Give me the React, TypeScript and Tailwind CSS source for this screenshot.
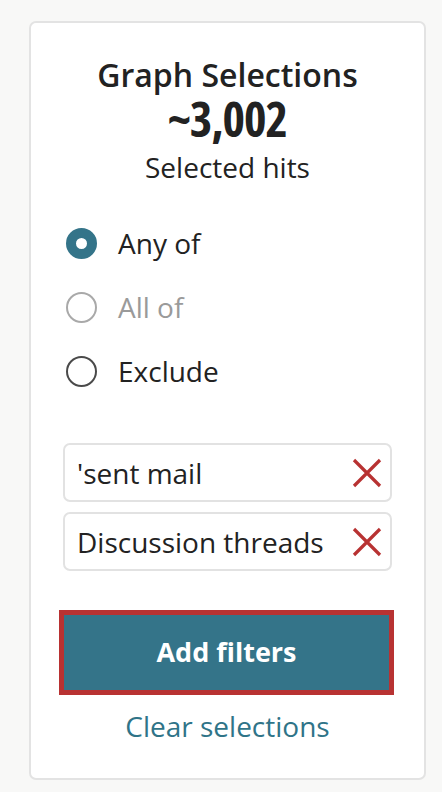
import { ReactNode } from 'react';

const tags = ["'sent mail", 'Discussion threads'];

function Radio({ label, state }: { label: string; state: 'on' | 'off' | 'disabled' }) {
  return (
    <div className="flex items-center gap-[21px] h-[64px]">
      {state === 'on' ? (
        <span className="w-[31px] h-[31px] rounded-full border-[10px] border-[#347489] bg-white box-border" />
      ) : (
        <span
          className={`w-[31px] h-[31px] rounded-full border-2 bg-white box-border ${
            state === 'disabled' ? 'border-[#a9a9a9]' : 'border-[#4a4a4a]'
          }`}
        />
      )}
      <span className={`text-[28px] ${state === 'disabled' ? 'text-[#9a9a9a]' : 'text-[#222]'}`}>{label}</span>
    </div>
  );
}

function Tag({ children }: { children: ReactNode }) {
  return (
    <div className="flex items-center justify-between h-[59px] border-2 border-[#e2e2e2] rounded-[7px] pl-[12px] pr-[7px]">
      <span className="text-[28px] text-[#222]">{children}</span>
      <svg width="32" height="32" viewBox="0 0 32 32" className="shrink-0">
        <path d="M3 3 L29 29 M29 3 L3 29" stroke="#b83232" strokeWidth="3.2" strokeLinecap="butt" />
      </svg>
    </div>
  );
}

export default function App() {
  return (
    <div className="min-h-screen bg-[#f8f8f7] pl-[29px] pr-[16px] pt-[21px] font-['Open_Sans',sans-serif]">
      <div className="h-[759px] bg-white border-2 border-[#e3e3e3] rounded-[7px] px-[32px] pt-[34px]">
        <div className="text-center text-[#222]">
          <h1 className="text-[32px] font-semibold leading-[36px]">Graph Selections</h1>
          <div className="text-[48px] font-bold leading-[48px] tracking-[-1px] mt-[2px] [font-stretch:75%]">~3,002</div>
          <div className="text-[28px] leading-[40px] mt-[4px]">Selected hits</div>
        </div>

        <div className="mt-[24px] pl-[3px]">
          <Radio label="Any of" state="on" />
          <Radio label="All of" state="disabled" />
          <Radio label="Exclude" state="off" />
        </div>

        <div className="mt-[40px] flex flex-col gap-[10px]">
          {tags.map((t) => (
            <Tag key={t}>{t}</Tag>
          ))}
        </div>

        <button className="block mt-[39px] w-[335px] h-[85px] bg-[#347489] border-[5px] border-[#b83232] text-white text-[27px] font-bold -ml-[4px]">
          Add filters
        </button>

        <div className="text-center text-[28px] text-[#2f7488] mt-[10px]">Clear selections</div>
      </div>
    </div>
  );
}
